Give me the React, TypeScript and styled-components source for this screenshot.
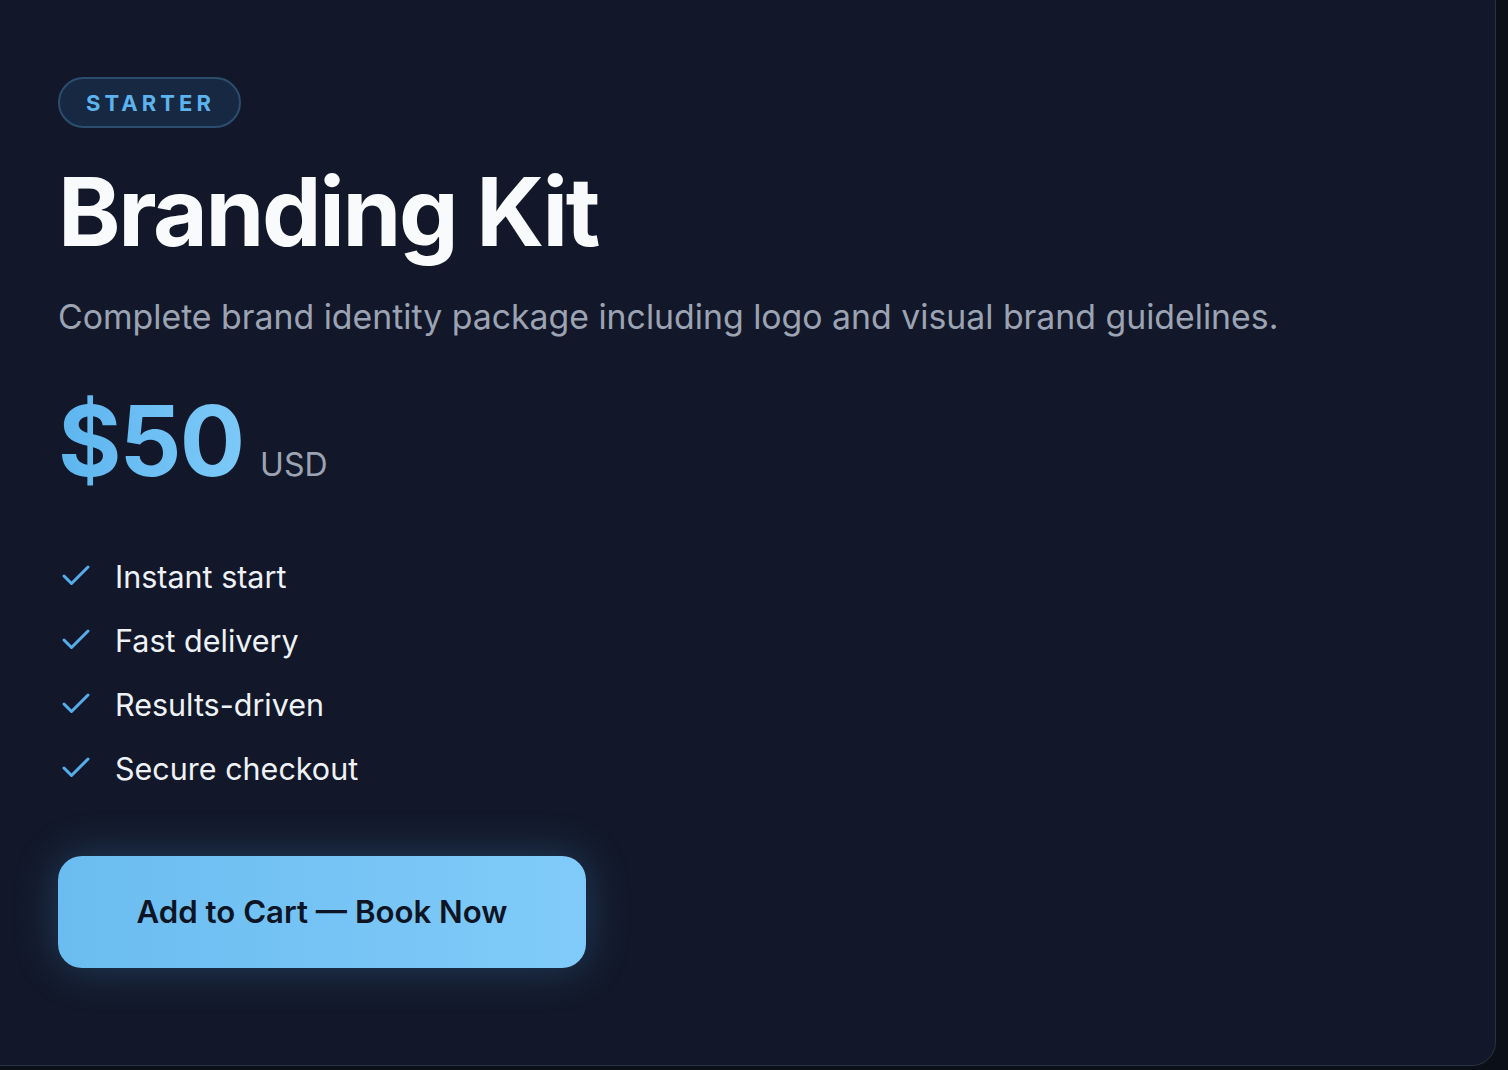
import React from "react";
import styled, { createGlobalStyle } from "styled-components";

const Global = createGlobalStyle`
  html, body { margin: 0; padding: 0; background: #0b0f18; overflow: hidden; }
  body { font-family: Inter, "Noto Sans", sans-serif; -webkit-font-smoothing: antialiased; }
`;

const Page = styled.div`
  width: 1508px;
  height: 1070px;
  overflow: hidden;
  background: #0b0f18;
`;

const Card = styled.section`
  box-sizing: border-box;
  margin: -22px 0 0 -40px;
  width: 1536px;
  height: 1088px;
  padding: 98px 97px 97px 97px;
  background: #121829;
  border: 1px solid #2a3345;
  border-radius: 24px;
  display: flex;
  flex-direction: column;
  align-items: flex-start;
  & > * { flex-shrink: 0; }
`;

const Badge = styled.span`
  box-sizing: border-box;
  height: 51px;
  padding: 0 24px 0 26px;
  display: inline-flex;
  align-items: center;
  border-radius: 999px;
  background: #172842;
  border: 2px solid #2c4d6e;
  color: #5cb3ee;
  font-size: 22px;
  font-weight: 700;
  letter-spacing: 0.185em;
  text-transform: uppercase;
`;

const Title = styled.h1`
  margin: 37px 0 0;
  font-size: 94.5px;
  line-height: 1;
  font-weight: 700;
  letter-spacing: -0.025em;
  color: #f8fafc;
`;

const Desc = styled.p`
  margin: 35px 0 0;
  font-size: 33.8px;
  line-height: 1.3;
  color: #9ca3b3;
`;

const PriceRow = styled.div`
  margin-top: 54px;
  display: flex;
  align-items: baseline;
  gap: 17px;
`;

const Amount = styled.span`
  font-size: 97px;
  line-height: 1;
  font-weight: 700;
  letter-spacing: -0.02em;
  background: linear-gradient(90deg, #5eb5ef, #7cc9f8);
  -webkit-background-clip: text;
  background-clip: text;
  color: transparent;
`;

const Currency = styled.span`
  font-size: 32px;
  color: #9ca3b3;
`;

const Features = styled.ul`
  list-style: none;
  margin: 67px 0 0;
  padding: 0;
  display: flex;
  flex-direction: column;
  gap: 24px;
`;

const Feature = styled.li`
  display: flex;
  align-items: center;
  gap: 21px;
  height: 40px;
  font-size: 30.5px;
  color: #eef2f7;
`;

const Check = () => (
  <svg width="36" height="36" viewBox="0 0 24 24" fill="none" stroke="#55aeec" strokeWidth="2" strokeLinecap="round" strokeLinejoin="round">
    <path d="M20 6 9 17l-5-5" />
  </svg>
);

const CTA = styled.button`
  margin-top: 68px;
  width: 528px;
  height: 112px;
  border: none;
  border-radius: 24px;
  background: linear-gradient(90deg, #6bbcf0, #80cbf9);
  color: #0d1424;
  font-family: Inter, "Noto Sans", sans-serif;
  font-size: 31.2px;
  font-weight: 600;
  box-shadow: 0 0 44px rgba(80, 160, 230, 0.28);
  cursor: pointer;
`;

const features = ["Instant start", "Fast delivery", "Results-driven", "Secure checkout"];

export default function App() {
  return (
    <Page>
      <Global />
      <Card>
        <Badge>Starter</Badge>
        <Title>Branding Kit</Title>
        <Desc>Complete brand identity package including logo and visual brand guidelines.</Desc>
        <PriceRow>
          <Amount>$50</Amount>
          <Currency>USD</Currency>
        </PriceRow>
        <Features>
          {features.map((f) => (
            <Feature key={f}>
              <Check />
              {f}
            </Feature>
          ))}
        </Features>
        <CTA>Add to Cart — Book Now</CTA>
      </Card>
    </Page>
  );
}
